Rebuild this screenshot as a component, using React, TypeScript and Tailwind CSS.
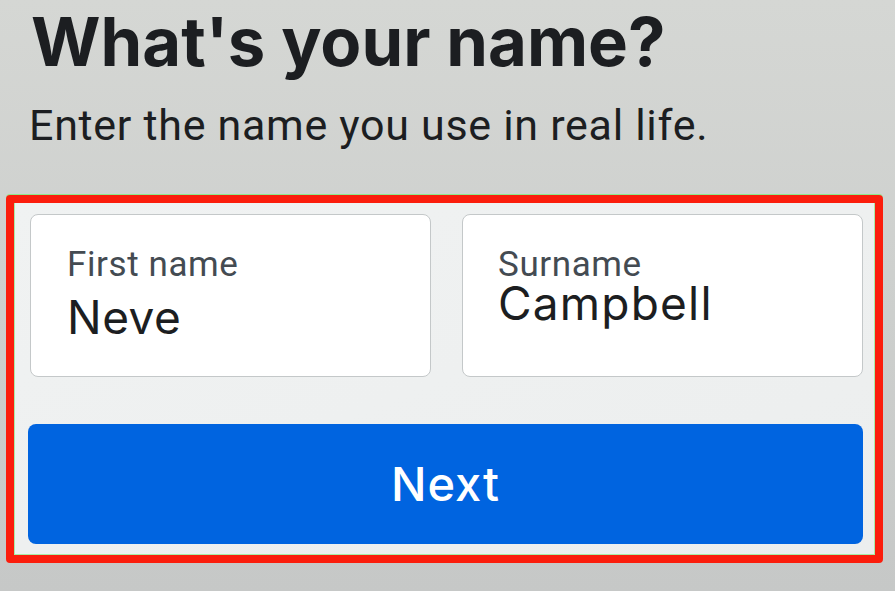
import React from "react";

const inter = { fontFamily: "Inter, 'Noto Sans', sans-serif" };
const roboto = { fontFamily: "Roboto, 'Noto Sans', sans-serif" };

function Field({ label, value, valueCls, pl }: { label: string; value: string; valueCls: string; pl: string }) {
  return (
    <div className={`w-[401px] h-[163px] bg-white rounded-[8px] border border-[#c4c8c9] pt-[33px] ${pl}`}>
      <div className="text-[35px] leading-[34px] tracking-[0.6px] text-[#444b52]" style={roboto}>
        {label}
      </div>
      <div className={`text-[46px] leading-[40px] text-[#1c1e21] ${valueCls}`} style={inter}>
        {value}
      </div>
    </div>
  );
}

export default function App() {
  return (
    <div className="w-[895px] h-[591px] overflow-hidden bg-gradient-to-b from-[#d5d7d4] to-[#c6c8c7] flex flex-col">
      <h1 className="pl-[31px] pt-[4px] text-[67px] leading-[76px] font-bold text-[#1c1e21]" style={inter}>
        What's your name?
      </h1>
      <p className="pl-[29px] mt-[20px] text-[43px] leading-[50px] tracking-[0.7px] text-[#1c1e21]" style={roboto}>
        Enter the name you use in real life.
      </p>
      <div className="ml-[6px] mt-[45px] w-[877px] h-[368px] rounded-[4px] border-[8px] border-[#fb1d0c] shadow-[0_-1px_0_0_#8ee98a]">
        <div className="w-full h-full border border-t-0 border-[#a8eca6] bg-gradient-to-br from-[#f0f2f2] to-[#eceeee] pl-[15px] pr-[11px] pt-[11px] flex flex-col">
          <div className="flex gap-[31px]">
            <Field label="First name" value="Neve" valueCls="mt-[15px] tracking-[0.5px]" pl="pl-[36px]" />
            <Field label="Surname" value="Campbell" valueCls="mt-[1px] tracking-[1.2px]" pl="pl-[35px]" />
          </div>
          <button
            className="-ml-[2px] mt-[47px] w-[835px] h-[120px] rounded-[8px] bg-[#0064e0] text-white text-[47px] tracking-[1px] font-medium flex items-center justify-center"
            style={inter}
          >
            Next
          </button>
        </div>
      </div>
    </div>
  );
}
